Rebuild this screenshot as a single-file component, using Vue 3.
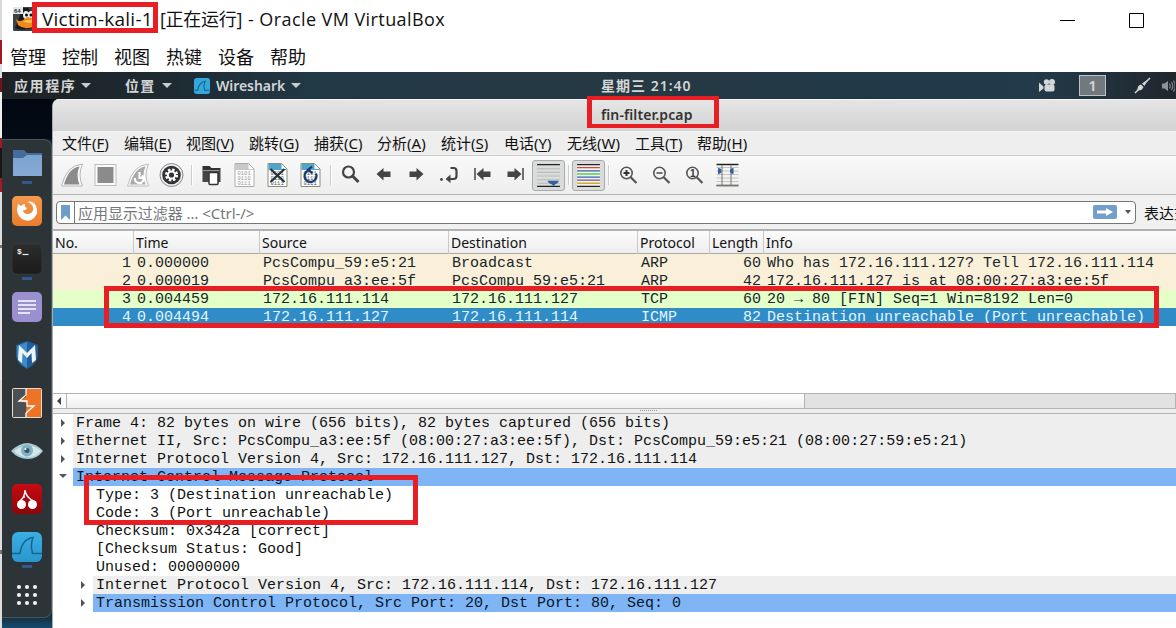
<script setup>
const vmMenu = ['管理', '控制', '视图', '热键', '设备', '帮助']
const menu = [
  ['文件', 'F', 62], ['编辑', 'E', 62], ['视图', 'V', 63], ['跳转', 'G', 65], ['捕获', 'C', 63],
  ['分析', 'A', 64], ['统计', 'S', 63], ['电话', 'Y', 63], ['无线', 'W', 68], ['工具', 'T', 62], ['帮助', 'H', 60],
]
const columns = ['No.', 'Time', 'Source', 'Destination', 'Protocol', 'Length', 'Info']
const packets = [
  { kind: 'arp', cells: ['1', '0.000000', 'PcsCompu_59:e5:21', 'Broadcast', 'ARP', '60', 'Who has 172.16.111.127? Tell 172.16.111.114'] },
  { kind: 'arp', cells: ['2', '0.000019', 'PcsCompu_a3:ee:5f', 'PcsCompu_59:e5:21', 'ARP', '42', '172.16.111.127 is at 08:00:27:a3:ee:5f'] },
  { kind: 'tcp', cells: ['3', '0.004459', '172.16.111.114', '172.16.111.127', 'TCP', '60', '20 → 80 [FIN] Seq=1 Win=8192 Len=0'] },
  { kind: 'sel', cells: ['4', '0.004494', '172.16.111.127', '172.16.111.114', 'ICMP', '82', 'Destination unreachable (Port unreachable)'] },
]
const tree = [
  { t: 'Frame 4: 82 bytes on wire (656 bits), 82 bytes captured (656 bits)', k: 'top grey', a: 'closed' },
  { t: 'Ethernet II, Src: PcsCompu_a3:ee:5f (08:00:27:a3:ee:5f), Dst: PcsCompu_59:e5:21 (08:00:27:59:e5:21)', k: 'top grey', a: 'closed' },
  { t: 'Internet Protocol Version 4, Src: 172.16.111.127, Dst: 172.16.111.114', k: 'top grey', a: 'closed' },
  { t: 'Internet Control Message Protocol', k: 'top blue', a: 'open' },
  { t: 'Type: 3 (Destination unreachable)', k: 'sub' },
  { t: 'Code: 3 (Port unreachable)', k: 'sub' },
  { t: 'Checksum: 0x342a [correct]', k: 'sub' },
  { t: '[Checksum Status: Good]', k: 'sub' },
  { t: 'Unused: 00000000', k: 'sub' },
  { t: 'Internet Protocol Version 4, Src: 172.16.111.114, Dst: 172.16.111.127', k: 'sub grey', a: 'closed' },
  { t: 'Transmission Control Protocol, Src Port: 20, Dst Port: 80, Seq: 0', k: 'sub blue', a: 'closed' },
]
const gridDots = [9, 17, 25].flatMap((y) => [8, 16, 24].map((x) => ({ x, y })))
const lineYs = [4.5, 8, 11.5, 15, 18.5, 22]
</script>

<template>
  <div class="screen">
    <div class="edge"></div>
    <div class="vm">
      <div class="titlebar">
        <svg class="tux" width="22" height="24" viewBox="0 0 22 24">
          <rect x="0" y="0" width="22" height="24" rx="1" fill="#3d4247" />
          <path d="M2 21Q7 24 20 21L21 9L15 1H10Z" fill="#17191b" />
          <rect x="0" y="0" width="10" height="7" fill="#e5e7e8" />
          <text x="1" y="6" class="bits">64</text>
          <ellipse cx="13" cy="8" rx="3" ry="4" fill="#eee" /><ellipse cx="18" cy="8" rx="3" ry="4" fill="#eee" />
          <circle cx="13.500" cy="8" r="1.500" fill="#111" /><circle cx="18" cy="8" r="1.500" fill="#111" />
          <path d="M3 12Q7 17 14 10L22 12V19Q12 24 5 18Z" fill="#f08a1d" />
          <path d="M10 14Q16 12 22 14Q16 18 10 14Z" fill="#fac34c" />
        </svg>
        <span class="name">Victim-kali-1</span><span class="state">[正在运行]</span><span class="product">- Oracle VM VirtualBox</span>
        <svg class="wincontrols" width="86" height="18" viewBox="0 0 86 18">
          <path d="M0 9.500H15M69.500 2.500H83.500V16.500H69.500Z" fill="none" stroke="#000" />
        </svg>
      </div>
      <div class="vmmenu"><span v-for="m in vmMenu" :key="m">{{ m }}</span></div>

      <div class="guest">
        <div class="panel">
          <span class="apps">应用程序<i></i></span>
          <span class="places">位置<i></i></span>
          <span class="active">
            <svg width="16" height="16" viewBox="0 0 30 30"><rect width="30" height="30" rx="5" fill="#35a7dd" /><path d="M1 23H7Q9 8 21 6Q17 14 20 23H29" fill="none" stroke="#13618c" stroke-width="2" /></svg>
            <b>Wireshark</b><i></i>
          </span>
          <span class="clock">星期三 21:40</span>
          <svg class="cam" width="17" height="15" viewBox="0 0 17 15"><g fill="#d3d7d8"><circle cx="7.500" cy="4" r="2.700" /><circle cx="13" cy="4" r="3" /><rect x="5.500" y="6.500" width="10" height="7" rx="2" /><path d="M0 4.500L4.500 8.500V10.500L0 14Z" /></g></svg>
          <span class="workspace">1</span>
          <svg class="pen" width="17" height="17" viewBox="0 0 17 17"><path d="M1 16L6 11M11 6L16 1" stroke="#d5d8d9" stroke-width="1.500" /><path d="M3.500 13.500Q3 8.500 7 7.500L9.500 10Q8 14 3.500 13.500ZM8 6.500L14 2.500L10.500 9Z" fill="#d5d8d9" /></svg>
          <svg class="vol" width="13" height="14" viewBox="0 0 13 14"><path d="M0 4.500H2.500L6 2V12L2.500 9.500H0Z" fill="#89949a" /><path d="M7.500 4.500Q9 7 7.500 9.500M9.500 3Q12 7 9.500 11M11.500 1.500Q15 7 11.500 12.500" fill="none" stroke="#75828a" stroke-width="1.300" /></svg>
        </div>

        <div class="desktop">
          <div class="side">
            <div class="dock">
              <svg class="on" viewBox="0 0 32 32"><defs><linearGradient id="fold" x2="0" y2="1"><stop stop-color="#7ba3cf" /><stop offset="1" stop-color="#86aad4" /></linearGradient></defs><path d="M2 3H13L16 6H31V15H2Z" fill="#456c9c" /><path d="M2 11H12L16 8H31V29H2Z" fill="url(#fold)" /></svg>
              <svg viewBox="0 0 32 32"><defs><linearGradient id="fox" x2="0" y2="1"><stop stop-color="#f39a4e" /><stop offset="1" stop-color="#ea7c2c" /></linearGradient></defs><rect x="1" y="1" width="30" height="30" rx="5" fill="url(#fox)" /><path d="M7 9L10 11Q12 9 14 9Q13 12 16 13Q15 16 12 15Q12 18 16 19Q21 19 22 15Q23 12 20 9Q18 7 16 7Q22 5 25 11Q28 18 23 23Q18 28 11 24Q4 19 7 9Z" fill="#fff" /></svg>
              <svg class="on" viewBox="0 0 32 32"><defs><linearGradient id="term" x2="0" y2="1"><stop stop-color="#2c2c2c" /><stop offset="1" stop-color="#1b1b1b" /></linearGradient></defs><rect x="1" y="1" width="30" height="30" rx="5" fill="url(#term)" stroke="#3d4040" stroke-width=".6" /><text x="6" y="11" class="prompt">$</text><path d="M11.500 11.500H17.500" stroke="#eee" stroke-width="1.200" /></svg>
              <svg viewBox="0 0 32 32"><rect x="1" y="1" width="30" height="30" rx="5" fill="#9a90d0" /><path d="M7 10H25M7 14H25M7 18H25M7 22H19" stroke="#fff" stroke-width="1.700" /></svg>
              <svg viewBox="0 0 32 32"><path d="M5 6L16 2L27 6V17Q26 25 16 30Q6 25 5 17Z" fill="#215f9c" /><path d="M6 7L16 3V29Q7 24 6 17Z" fill="#3f8bc9" /><path d="M7 21L8 6L16 14L24 6L25 21L21 24L20.500 14L16 19L11.500 14L11 24Z" fill="#eef4f8" /></svg>
              <svg viewBox="0 0 32 32"><rect x="1.500" y="1.500" width="29" height="29" rx="1" fill="#ed7327" /><path d="M2 2H15V10L8 14L16 16L15 23V30H2Z" fill="#4c5055" /><path d="M15 2V8L8 14H16V19H23L15 26V30" fill="none" stroke="#fff" stroke-width="1.300" /><rect x="1.500" y="1.500" width="29" height="29" rx="1" fill="none" stroke="#e5ddd2" /></svg>
              <svg viewBox="0 0 32 32"><path d="M0 16Q8 8 17 8Q26 9 32 16Q26 24 17 24Q7 24 0 16Z" fill="#a9ccd4" /><path d="M3 16Q10 11 17 11Q25 11 30 16Q25 22 17 22Q9 22 3 16Z" fill="#d3e7e9" /><circle cx="16" cy="15.500" r="6" fill="#84b0c4" /><circle cx="16" cy="15.500" r="2.500" fill="#31536c" /><circle cx="14.500" cy="14" r="1" fill="#fff" /></svg>
              <svg viewBox="0 0 32 32"><defs><linearGradient id="cher" x2="0" y2="1"><stop stop-color="#c90a12" /><stop offset="1" stop-color="#8c060b" /></linearGradient></defs><rect x="1" y="1" width="30" height="30" rx="5" fill="url(#cher)" /><circle cx="10.500" cy="21.500" r="4.500" fill="#fff" /><circle cx="21.500" cy="21.500" r="4.500" fill="#fff" /><path d="M9 18Q14 14 14 7Q15 15 23 18M14 14H12" fill="none" stroke="#fff" stroke-width="1.500" /></svg>
              <svg class="on" viewBox="0 0 32 32"><defs><linearGradient id="wire" x2="0" y2="1"><stop stop-color="#3aafe2" /><stop offset="1" stop-color="#2897cf" /></linearGradient></defs><rect x="1" y="1" width="30" height="30" rx="6" fill="url(#wire)" /><path d="M1 22.500H9Q11 8 22 6.500Q19 14 21.500 22.500H31" fill="none" stroke="#1b638c" stroke-width="1.500" /></svg>
              <svg viewBox="0 0 32 32"><circle v-for="(d, i) in gridDots" :key="i" :cx="d.x" :cy="d.y - 1" r="2.100" fill="#f1f3f3" /></svg>
            </div>
          </div>

          <div class="window">
            <div class="wtitle">fin-filter.pcap</div>
            <div class="wmenu">
              <span v-for="m in menu" :key="m[1]" :style="{ width: m[2] + 'px' }">{{ m[0] }}<em>(<u>{{ m[1] }}</u>)</em></span>
            </div>
            <div class="toolbar">
              <svg viewBox="0 0 26 26"><path d="M2 24Q7 3 23 2Q18 13 23 24Z" fill="#fafafa" stroke="#b5b5b5" /><path d="M4.500 22.500Q9 6 20 4.500Q16 13 20 22.500Z" fill="#8b8b8b" /></svg>
              <svg viewBox="0 0 26 26"><rect x="2.500" y="2.500" width="21" height="21" fill="#fafafa" stroke="#bcbcbc" /><rect x="5" y="5" width="16" height="16" fill="#8b8b8b" /></svg>
              <svg viewBox="0 0 26 26"><path d="M2 24Q7 3 23 2Q18 13 23 24Z" fill="#fafafa" stroke="#bcbcbc" /><path d="M4.500 22.500Q9 6 20 4.500Q16 13 20 22.500Z" fill="#aaa" /><path d="M16.500 13.500A4.300 4.300 0 1 1 9.500 16M14 10V16H18" fill="none" stroke="#fff" stroke-width="2.200" /></svg>
              <svg viewBox="0 0 26 26"><circle cx="13" cy="13" r="11.500" fill="#eee" stroke="#888" /><circle cx="13" cy="13" r="9.300" fill="#303236" /><circle cx="13" cy="13" r="5.300" fill="none" stroke="#fff" stroke-width="2.600" stroke-dasharray="2.400 1.763" /><circle cx="13" cy="13" r="4.600" fill="#fff" /><circle cx="13" cy="13" r="2.600" fill="#303236" /></svg>
              <s></s>
              <svg viewBox="0 0 26 26"><path d="M4 4H11L13 6H22V9H4Z" fill="#333" /><path d="M4 9H22V20H4Z" fill="#454545" /><path d="M4 8.500H21" fill="none" stroke="#999" /><rect x="10.500" y="10.500" width="9" height="12" rx="1" fill="#fff" stroke="#333" stroke-width="1.500" /></svg>
              <svg v-for="p in 3" :key="p" viewBox="0 0 26 26">
                <path d="M3.500 1.500H17L22.500 7V24.500H3.500Z" fill="#fff" :stroke="p === 1 ? '#aaa' : '#888d79'" />
                <path d="M4 2H17V7H22V8H4Z" :fill="p === 1 ? '#c7c9c9' : '#4fa5ca'" />
                <g class="digits" :class="{ dim: p === 1 }"><text x="6" y="13">0101</text><text x="6" y="18">0110</text><text x="6" y="23">0111</text></g>
                <path v-if="p === 2" d="M6 7L20 20M20 7L6 20" stroke="#263038" stroke-width="2.300" />
                <path v-if="p === 3" d="M18.500 11.500A6 6 0 1 1 13 8M14.500 4.500L10.500 8L15 11" fill="none" stroke="#1d3973" stroke-width="2.300" />
              </svg>
              <s></s>
              <svg viewBox="0 0 26 26"><circle cx="11" cy="10" r="5.500" fill="none" stroke="#444" stroke-width="2.200" /><path d="M15 14L21 20" stroke="#444" stroke-width="3" /></svg>
              <svg viewBox="0 0 26 26"><path d="M6 12L13 6V9.500H20V15H13V18.500Z" fill="#444" /></svg>
              <svg viewBox="0 0 26 26"><path d="M20 12L13 6V9.500H6V15H13V18.500Z" fill="#444" /></svg>
              <svg viewBox="0 0 26 26"><path d="M14 6H17Q20 6 20 9V14Q20 17 17 17H13" fill="none" stroke="#444" stroke-width="2.200" /><path d="M9 17L14 12.500V21Z" fill="#444" /><circle cx="5" cy="17.500" r="1.400" fill="#444" /></svg>
              <svg viewBox="0 0 26 26"><path d="M5.500 6V18" stroke="#444" stroke-width="1.500" /><path d="M7 12L14 6V9.500H21V15H14V18.500Z" fill="#444" /></svg>
              <svg viewBox="0 0 26 26"><path d="M20.500 6V18" stroke="#444" stroke-width="1.500" /><path d="M19 12L12 6V9.500H5V15H12V18.500Z" fill="#444" /></svg>
              <svg class="down" viewBox="0 0 26 26"><path d="M2 2.500H24M2 23.500H24" stroke="#222" stroke-width="1.300" /><path v-for="y in lineYs.slice(0, 5)" :key="y" :d="`M2 ${y + 2}H24`" stroke="#b9bdb7" /><path d="M12 18H23Q22 21 19.500 21.500L18 23L16 21.500Q13 21 12 18Z" fill="#315f9f" /></svg>
              <s></s>
              <svg class="down" viewBox="0 0 26 26"><rect x="2" y="2" width="22" height="22" fill="#f2f2f2" /><path d="M2 2.500H24M2 23.500H24" stroke="#222" stroke-width="1.300" /><path d="M2 5.500H24" stroke="#d7443b" stroke-width="1.200" /><path d="M2 8.500H24M2 14.500H24" stroke="#3c5fac" stroke-width="1.200" /><path d="M2 11.500H24" stroke="#58cf45" stroke-width="1.400" /><path d="M2 17.500H24" stroke="#73538c" stroke-width="1.200" /><path d="M2 20.500H24" stroke="#d7a72f" stroke-width="1.400" /></svg>
              <s></s>
              <svg viewBox="0 0 26 26"><circle cx="11" cy="11" r="5.700" fill="none" stroke="#555" stroke-width="1.600" /><path d="M15 15L21 21" stroke="#555" stroke-width="2.200" /><path d="M8 11H14M11 8V14" stroke="#333" stroke-width="2" /></svg>
              <svg viewBox="0 0 26 26"><circle cx="11" cy="11" r="5.700" fill="none" stroke="#555" stroke-width="1.600" /><path d="M15 15L21 21" stroke="#555" stroke-width="2.200" /><path d="M8 11H14" stroke="#444" stroke-width="1.600" /></svg>
              <svg viewBox="0 0 26 26"><circle cx="11" cy="11" r="5.700" fill="none" stroke="#555" stroke-width="1.600" /><path d="M15 15L21 21" stroke="#555" stroke-width="2.200" /><text x="8.500" y="14.500" class="one">1</text></svg>
              <svg viewBox="0 0 26 26"><path d="M2 2.500H24M2 23.500H24" stroke="#222" stroke-width="1.300" /><path v-for="y in lineYs" :key="y" :d="`M2 ${y + 1}H24`" stroke="#c3c7c0" /><path d="M7.500 3V23M16.500 3V23" stroke="#777" /><path d="M3.500 6Q7 6 7 9Q7 12 3.500 12ZM19 6Q15.500 6 15.500 9Q15.500 12 19 12Z" fill="#315f9f" /></svg>
            </div>
            <div class="filterbar">
              <div class="filter">
                <span class="mark"><svg width="9" height="15" viewBox="0 0 9 15"><path d="M0 0H9V15L4.500 10.500L0 15Z" fill="#6f9cca" /></svg></span>
                <span class="hint">应用显示过滤器 … &lt;Ctrl-/&gt;</span>
                <svg class="go" width="24" height="14" viewBox="0 0 24 14"><rect width="24" height="14" rx="2" fill="#729fcb" /><path d="M4 5.500H13V3L20 7L13 11V8.500H4Z" fill="#fff" /></svg>
                <i></i>
              </div>
              <span class="expr">表达式</span>
            </div>
            <div class="list">
              <div class="cols head"><span v-for="c in columns" :key="c">{{ c }}</span></div>
              <div v-for="(p, i) in packets" :key="i" class="cols row" :class="p.kind"><span v-for="(c, j) in p.cells" :key="j">{{ c }}</span></div>
            </div>
            <div class="scroll"><span class="arrow"><i></i></span><span class="thumb"></span></div>
            <div class="split"><span></span></div>
            <div class="tree">
              <div v-for="(r, i) in tree" :key="i" class="node" :class="r.k"><span class="tw"><i v-if="r.a" :class="r.a"></i></span><span class="label">{{ r.t }}</span></div>
            </div>
          </div>
        </div>
      </div>
    </div>
    <div class="note n1"></div><div class="note n2"></div><div class="note n3"></div><div class="note n4"></div>
  </div>
</template>

<style>
body { margin: 0; overflow: hidden; }
</style>
<style scoped>
* { box-sizing: border-box; }
.screen { position: relative; width: 1176px; height: 628px; display: flex; overflow: hidden; background: #fff; color: #111; font-family: "Noto Sans", "Noto Sans CJK SC", sans-serif; white-space: pre; }
.screen svg { flex: none; display: block; }
.edge { width: 2px; background: linear-gradient(#d9d9d9 0 40px, #a31921 40px 64px, #dedede 64px 78px, #741219 78px 92px, #eee 92px 138px, #a31921 138px 148px, #181818 148px 178px, #a31921 178px 192px, #ddd 192px 245px, #777 245px 248px, #e7e7e7 248px 380px, #ddd 380px 550px, #777 550px 554px, #ddd 554px); }
.vm { width: 1174px; display: flex; flex-direction: column; }
.titlebar { height: 40px; display: flex; align-items: center; font: 18px/36px "Open Sans", "Noto Sans CJK SC", sans-serif; color: #111; }
.titlebar span { margin-top: -2px; }
.tux { margin: -2px 7px 0 11px; }
.bits { font: bold 6px "Liberation Sans", sans-serif; fill: #333; }
.name { width: 118px; font-size: 19px; letter-spacing: .250px; }
.state { width: 88px; letter-spacing: -.300px; }
.product { width: 812px; letter-spacing: .420px; }
.wincontrols { margin-top: -1px; }
.vmmenu { height: 32px; display: flex; gap: 16px; padding-left: 8px; font: 18px/32px "Noto Sans CJK SC", sans-serif; }
.guest { height: 556px; }
.panel { height: 27px; display: flex; align-items: center; background: linear-gradient(90deg, #1d2123 0, #1e2b33 15%, #213845 26%, #263943 54%, #203847 75%, #223a49 88%, #20272d 100%); color: #d3d6d6; font: bold 14px/27px "Noto Sans", "Noto Sans CJK SC", sans-serif; }
.panel span { display: flex; align-items: center; flex: none; }
.panel i { width: 0; border: 5px solid transparent; border-top: 5px solid #c9cccc; border-bottom: 0; margin-left: 7px; }
.apps { width: 110px; padding-left: 12px; letter-spacing: 1.600px; }
.apps i { margin-left: 5px; }
.places { width: 82px; padding-left: 13px; letter-spacing: 1.200px; }
.active { width: 407px; }
.active b { margin-left: 6px; width: 70px; font-weight: 600; letter-spacing: -.050px; }
.panel .active i { margin-left: 5px; }
.clock { width: 438px; letter-spacing: 1px; font-weight: 600; }
.cam { margin-right: 23px; }
.panel .workspace { width: 27px; height: 21px; justify-content: center; background: #71797e; border: 1px solid #b9c3c8; margin-right: 28px; font-size: 15px; font-weight: 600; }
.pen { margin-right: 11px; }
.desktop { height: 529px; display: flex; background: linear-gradient(#020811, #030b14 40px, #15232c 41px, #152a38 515px, #164b6c); }
.side { width: 50px; padding-top: 40px; }
.dock { height: 479px; background: #2d3437; border: 1px solid #47555b; border-left: 0; border-radius: 0 8px 8px 0; padding-left: 9px; display: flex; flex-direction: column; gap: 16px; padding-top: 7px; }
.screen .dock svg { width: 32px; height: 32px; overflow: visible; }
.dock svg.on { background: linear-gradient(#31598e, #31598e) no-repeat 11px 34px / 10px 3px; }
.dock .on { height: 41px !important; margin-bottom: -9px; padding-bottom: 9px; }
.prompt { font: bold 8px "Liberation Mono", monospace; fill: #eee; }
.window { width: 1124px; background: #fff; border-radius: 7px 0 0 0; overflow: hidden; border-left: 1px solid #a8abad; }
.wtitle { height: 32px; padding-left: 548px; background: linear-gradient(#e5e5e5, #d3d3d3); border-top: 1px solid #f4f4f4; color: #333; font-size: 14px; line-height: 30px; font-weight: 600; letter-spacing: .100px; }
.wmenu { height: 25px; padding-left: 9px; display: flex; background: #eeeeee; border-bottom: 1px solid #ccc; font: 15px/24px "Noto Sans CJK SC", sans-serif; }
.wmenu em { font: 15px/24px "Noto Sans", sans-serif; }
.wmenu u { text-underline-offset: 2px; }
.toolbar { height: 39px; display: flex; align-items: center; padding-left: 3px; background: linear-gradient(#f9f9f9, #eee); border-bottom: 1px solid #b4b4b4; }
.screen .toolbar svg { width: 33px; height: 26px; }
.toolbar s { width: 7px; height: 20px; background: linear-gradient(90deg, transparent 3px, #ccc 3px 4px, #fff 4px 5px, transparent 5px); }
.screen .toolbar svg.down { height: 31px; background: #dadbdb; border: 1px solid #aaa; border-radius: 3px; padding: 1px 0; }
.digits { font: 5.500px "Liberation Mono", monospace; fill: #4f5b5c; }
.dim { fill: #999; }
.one { font: bold 10px "Liberation Sans", sans-serif; fill: #333; }
.filterbar { height: 34px; background: #f1f1f1; display: flex; align-items: center; padding-left: 3px; }
.filter { flex: none; width: 1080px; height: 23px; display: flex; align-items: center; background: #fff; border: 1px solid #777; border-radius: 4px; }
.mark { width: 18px; height: 21px; border-right: 1px solid #777; padding: 3px 4px; }
.hint { width: 1018px; padding: 2px 0 0 3px; color: #747779; font-size: 15px; line-height: 20px; letter-spacing: -.050px; }
.filter i { margin-left: 8px; border: 3.500px solid transparent; border-top: 4px solid #555; border-bottom: 0; }
.expr { flex: none; margin-left: 8px; padding-top: 1px; font-size: 15px; line-height: 20px; }
.list { height: 164px; border-top: 2px solid #b1b1b1; }
.cols { display: grid; grid-template-columns: 80px 126px 189px 189px 72px 54px 1fr; }
.head { height: 23px; background: linear-gradient(#fcfcfc, #ededed); border-bottom: 1px solid #aaa; font-size: 14px; line-height: 23px; }
.head span { padding-left: 2px; border-left: 1px solid #c9c9c9; min-width: 0; }
.head span:first-child { border: 0; }
.row { height: 18px; overflow: hidden; font: 15px/20px "Liberation Mono", monospace; color: #17262b; }
.row span { padding-left: 4px; }
.row span:first-child, .row span:nth-child(6) { text-align: right; padding-right: 2px; }
.arp { background: #faf0d9; }
.tcp { background: #e4ffc7; }
.sel { background: #308cc6; color: #e4f5fd; }
.scroll { height: 16px; background: #e2e2e2; border: 1px solid #b4b4b4; border-left: 0; display: flex; }
.arrow { width: 14px; border-right: 1px solid #b4b4b4; background: #fbfbfb; padding: 3px 4px; }
.arrow i { display: block; width: 0; border: 4px solid transparent; border-right: 4px solid #444; border-left: 0; }
.thumb { width: 738px; background: linear-gradient(#fff, #eee); border-right: 1px solid #b4b4b4; }
.split { height: 5px; background: #eee; border-bottom: 1px solid #b4b4b4; }
.split span { display: block; width: 17px; margin-left: 587px; border-top: 1px dotted #999; transform: translateY(1px); }
.tree { height: 215px; font: 15px/20px "Liberation Mono", monospace; }
.node { height: 18px; display: flex; }
.tw { width: 20px; padding: 5px 0 0 8px; }
.sub .tw { width: 40px; padding-left: 28px; }
.tw i { display: block; width: 0; border: 4px solid transparent; border-left: 4px solid #555; border-right: 0; }
.tw i.open { border: 4px solid transparent; border-top: 4px solid #555; border-bottom: 0; margin: 1px 0 0 -2px; }
.label { flex: 1; height: 18px; padding-left: 3px; }
.grey .label { background: #eeeeee; }
.blue .label { background: #80b5f5; color: #05162b; }
.note { position: absolute; border: 5px solid #e81e25; }
.n1 { left: 32px; top: 2px; width: 126px; height: 31px; }
.n2 { left: 587px; top: 96px; width: 132px; height: 32px; border-width: 4px 5px; }
.n3 { left: 104px; top: 286px; width: 1055px; height: 42px; }
.n4 { left: 84px; top: 475px; width: 334px; height: 50px; }
</style>
